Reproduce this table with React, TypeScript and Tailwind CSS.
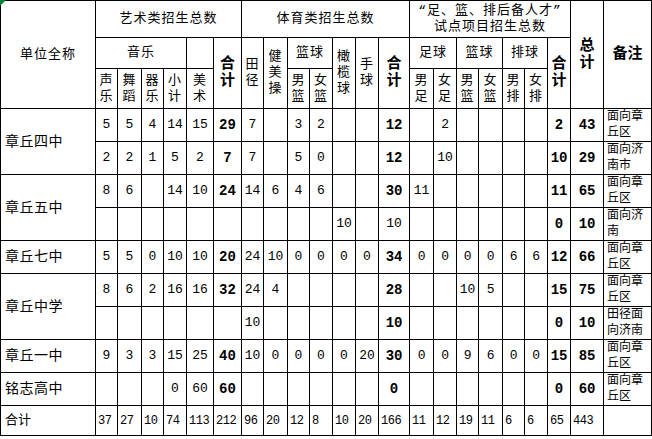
import React from "react";

type Row = { name?: string; span?: number; vals: string[]; note: string; plainCol14?: boolean };

const rows: Row[] = [
  { name: "章丘四中", span: 2, vals: ["5","5","4","14","15","29","7","","3","2","","","12","","2","","","","","2","43"], note: "面向章丘区" },
  { vals: ["2","2","1","5","2","7","7","","5","0","","","12","","10","","","","","10","29"], note: "面向济南市" },
  { name: "章丘五中", span: 2, vals: ["8","6","","14","10","24","14","6","4","6","","","30","11","","","","","","11","65"], note: "面向章丘区" },
  { vals: ["","","","","","","","","","","10","","10","","","","","","","0","10"], note: "面向济南", plainCol14: true },
  { name: "章丘七中", span: 1, vals: ["5","5","0","10","10","20","24","10","0","0","0","0","34","0","0","0","0","6","6","12","66"], note: "面向章丘区" },
  { name: "章丘中学", span: 2, vals: ["8","6","2","16","16","32","24","4","","","","","28","","","10","5","","","15","75"], note: "面向章丘区" },
  { vals: ["","","","","","","10","","","","","","10","","","","","","","0","10"], note: "田径面向济南" },
  { name: "章丘一中", span: 1, vals: ["9","3","3","15","25","40","10","0","0","0","0","20","30","0","0","9","6","0","0","15","85"], note: "面向章丘区" },
  { name: "铭志高中", span: 1, vals: ["","","","0","60","60","","","","","","","0","","","","","","","0","60"], note: "面向章丘区" },
];

const totals = ["37","27","10","74","113","212","96","20","12","8","10","20","166","11","12","19","11","6","6","65","443"];

const boldIdx = [5, 12, 19, 20];

const th = "border border-black p-0 text-center align-middle font-normal text-[13px] leading-[16px] tracking-[1px]";
const thBold = "border border-black p-0 text-center align-middle font-bold text-[15px] leading-[17px]";

export default function App() {
  return (
    <div className="relative w-[652px] h-[439px] bg-white overflow-hidden text-black">
      <table className="table-fixed border-collapse w-[651px] font-['Liberation_Mono','Noto_Sans_CJK_SC',monospace]">
        <colgroup>
          <col className="w-[95px]" />
          <col className="w-[22px]" />
          <col className="w-[24px]" />
          <col className="w-[22px]" />
          <col className="w-[23px]" />
          <col className="w-[27px]" />
          <col className="w-[28px]" />
          <col className="w-[22px]" />
          <col className="w-[24px]" />
          <col className="w-[22px]" />
          <col className="w-[23px]" />
          <col className="w-[23px]" />
          <col className="w-[23px]" />
          <col className="w-[31px]" />
          <col className="w-[24px]" />
          <col className="w-[23px]" />
          <col className="w-[22px]" />
          <col className="w-[24px]" />
          <col className="w-[22px]" />
          <col className="w-[23px]" />
          <col className="w-[23px]" />
          <col className="w-[33px]" />
          <col className="w-[48px]" />
        </colgroup>
        <thead>
          <tr className="h-[37px]">
            <th rowSpan={3} className={`${th} tracking-[0.5px]`}>单位全称</th>
            <th colSpan={6} className={th}>艺术类招生总数</th>
            <th colSpan={7} className={th}>体育类招生总数</th>
            <th colSpan={7} className={`${th} leading-[15px]`}>
              “足、篮、排后备人才”
              <br />
              试点项目招生总数
            </th>
            <th rowSpan={3} className={thBold}>
              总<br />计
            </th>
            <th rowSpan={3} className={`${thBold} text-[14px]`}>备注</th>
          </tr>
          <tr className="h-[31px]">
            <th colSpan={4} className={th}>音乐</th>
            <th className={th}></th>
            <th rowSpan={2} className={thBold}>
              合<br />计
            </th>
            <th rowSpan={2} className={`${th} leading-[15px]`}>田径</th>
            <th rowSpan={2} className={`${th} leading-[15px]`}>健美操</th>
            <th colSpan={2} className={th}>篮球</th>
            <th rowSpan={2} className={`${th} leading-[15px]`}>橄榄球</th>
            <th rowSpan={2} className={`${th} leading-[15px]`}>手球</th>
            <th rowSpan={2} className={thBold}>
              合<br />计
            </th>
            <th colSpan={2} className={th}>足球</th>
            <th colSpan={2} className={th}>篮球</th>
            <th colSpan={2} className={th}>排球</th>
            <th rowSpan={2} className={thBold}>
              合<br />计
            </th>
          </tr>
          <tr className="h-[40px]">
            <th className={th}>声乐</th>
            <th className={th}>舞蹈</th>
            <th className={th}>器乐</th>
            <th className={th}>小计</th>
            <th className={th}>美术</th>
            <th className={th}>男篮</th>
            <th className={th}>女篮</th>
            <th className={th}>男足</th>
            <th className={th}>女足</th>
            <th className={th}>男篮</th>
            <th className={th}>女篮</th>
            <th className={th}>男排</th>
            <th className={th}>女排</th>
          </tr>
        </thead>
        <tbody>
          {rows.map((r, ri) => (
            <tr key={ri} className="h-[33px]">
              {r.name && (
                <td
                  rowSpan={r.span}
                  className="border border-black p-0 pl-[4px] text-left align-middle text-[14px] tracking-[0.5px] leading-[16px]"
                >
                  {r.name}
                </td>
              )}
              {r.vals.map((v, vi) => {
                const bold = boldIdx.includes(vi) && !(r.plainCol14 && vi === 12);
                return (
                  <td
                    key={vi}
                    className={
                      bold
                        ? "border border-black p-0 text-center align-middle font-bold text-[14px] leading-[16px]"
                        : "border border-black p-0 text-center align-middle text-[13px] leading-[16px]"
                    }
                  >
                    {v}
                  </td>
                );
              })}
              <td className="border border-black p-0 pl-[3px] text-left align-middle text-[12px] leading-[16px]">
                {r.note}
              </td>
            </tr>
          ))}
          <tr className="h-[30px]">
            <td className="border border-black p-0 pl-[4px] text-left align-middle text-[13px] leading-[16px]">合计</td>
            {totals.map((v, vi) => (
              <td key={vi} className="border border-black p-0 pl-[2px] text-left align-middle text-[12px] leading-[16px] tracking-[-0.5px]">
                {v}
              </td>
            ))}
            <td className="border border-black p-0"></td>
          </tr>
        </tbody>
      </table>
      <div className="absolute left-0 top-0 w-0 h-0 border-t-[6px] border-t-green-700 border-r-[6px] border-r-transparent" />
    </div>
  );
}
